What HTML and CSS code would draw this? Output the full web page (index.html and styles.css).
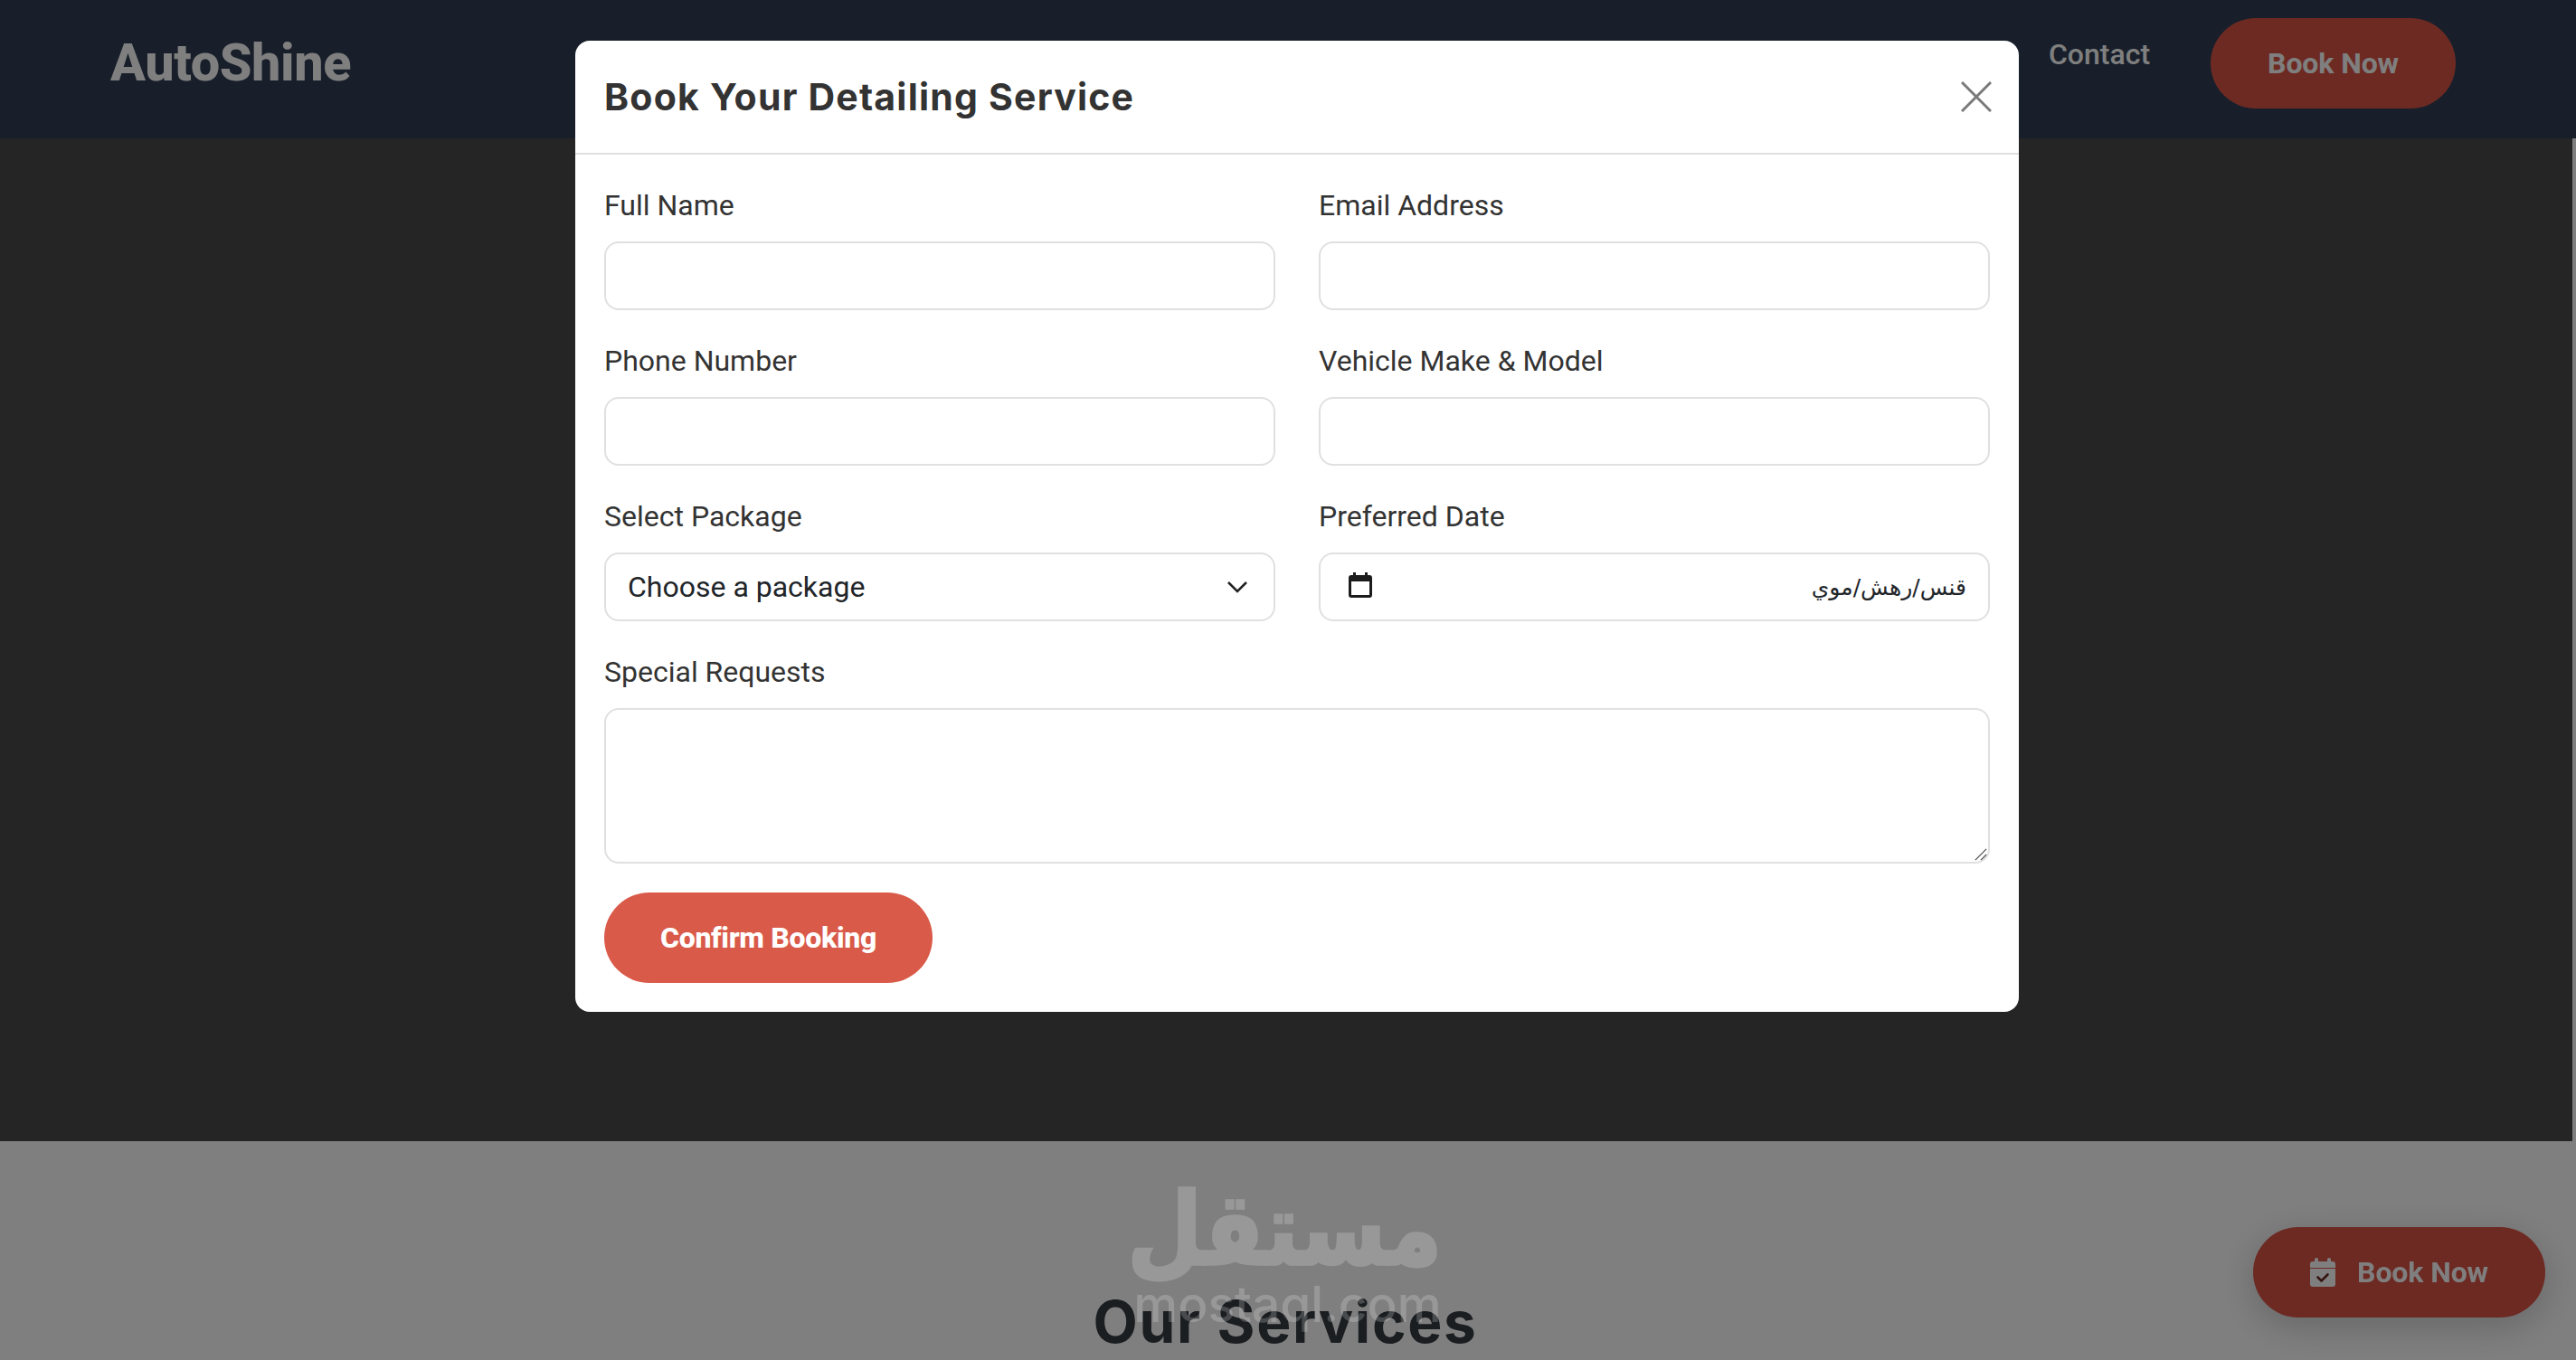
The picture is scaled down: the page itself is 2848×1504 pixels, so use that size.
FILE: index.html
```html
<!DOCTYPE html>
<html lang="en">
<head>
<meta charset="UTF-8">
<meta name="viewport" content="width=device-width, initial-scale=1.0">
<title>AutoShine</title>
<link rel="stylesheet" href="styles.css">
</head>
<body>

<header class="site-header">
    <a class="logo" href="#">AutoShine</a>
    <div class="header-right">
        <a class="nav-link" href="#">Contact</a>
        <a class="btn-book" href="#">Book Now</a>
    </div>
</header>

<section class="hero"></section>

<section class="services">
    <h2>Our Services</h2>
</section>

<a class="btn-float" href="#">
    <svg class="float-icon" viewBox="0 0 28 32">
        <path fill="currentColor" d="M7 0a2 2 0 0 1 2 2v2h10V2a2 2 0 0 1 4 0v2h2a3 3 0 0 1 3 3v4H0V7a3 3 0 0 1 3-3h2V2a2 2 0 0 1 2-2z"/>
        <path fill="currentColor" fill-rule="evenodd" d="M0 12h28v17a3 3 0 0 1-3 3H3a3 3 0 0 1-3-3z"/>
        <path fill="none" stroke="#6d2a23" stroke-width="2.6" stroke-linecap="round" stroke-linejoin="round" d="M8.5 21.5l4 4 7-7"/>
    </svg>
    Book Now
</a>

<div class="backdrop">
    <div class="modal">
        <div class="modal-header">
            <h3>Book Your Detailing Service</h3>
            <svg class="close-icon" viewBox="0 0 34 34">
                <path d="M1 1l32 32M33 1L1 33" fill="none" stroke="#7a7a7a" stroke-width="3"/>
            </svg>
        </div>
        <form class="modal-body">
            <div class="form-grid">
                <div class="field">
                    <label>Full Name</label>
                    <input type="text">
                </div>
                <div class="field">
                    <label>Email Address</label>
                    <input type="text">
                </div>
                <div class="field">
                    <label>Phone Number</label>
                    <input type="text">
                </div>
                <div class="field">
                    <label>Vehicle Make &amp; Model</label>
                    <input type="text">
                </div>
                <div class="field">
                    <label>Select Package</label>
                    <div class="control select-control">
                        <span>Choose a package</span>
                        <svg class="chevron" viewBox="0 0 24 14">
                            <path d="M2 2l10 10L22 2" fill="none" stroke="#222" stroke-width="2.6"/>
                        </svg>
                    </div>
                </div>
                <div class="field">
                    <label>Preferred Date</label>
                    <div class="control date-control">
                        <svg class="calendar" viewBox="0 0 26 28">
                            <path fill="#1c1c1c" fill-rule="evenodd" d="M5 0h3v3h10V0h3v3h2a3 3 0 0 1 3 3v19a3 3 0 0 1-3 3H3a3 3 0 0 1-3-3V6a3 3 0 0 1 3-3h2zM3 10v15h20V10z"/>
                        </svg>
                        <span class="date-text" dir="rtl">قنس/رهش/موي</span>
                    </div>
                </div>
                <div class="field field-wide">
                    <label>Special Requests</label>
                    <div class="textarea-wrap">
                        <textarea></textarea>
                        <svg class="resize-grip" viewBox="0 0 16 16">
                            <path d="M1 15L15 1M8 15l7-7" fill="none" stroke="#555" stroke-width="1.6"/>
                        </svg>
                    </div>
                </div>
            </div>
            <button class="btn-confirm" type="button">Confirm Booking</button>
        </form>
    </div>
</div>

<div class="watermark">
    <div class="watermark-ar" dir="rtl">مستقل</div>
    <div class="watermark-en">mostaql.com</div>
</div>

</body>
</html>
```

FILE: styles.css
```css
* {
    box-sizing: border-box;
}
body {
    margin: 0;
    height: 1504px;
    overflow: hidden;
    background-color: #fff;
    font-family: Roboto, "Liberation Sans", sans-serif;
    font-size: 32px;
    color: #212529;
}
a {
    text-decoration: none;
}

/* page behind the modal */
.site-header {
    height: 153px;
    padding: 0 133px 14px 122px;
    display: flex;
    justify-content: space-between;
    align-items: center;
    background-color: #303f54;
}
.logo {
    font-size: 57.6px;
    font-weight: 800;
    letter-spacing: -0.4px;
    color: #fff;
}
.header-right {
    display: flex;
    align-items: center;
    gap: 67px;
}
.nav-link {
    margin-top: -20px;
    font-weight: 500;
    color: #fff;
}
.btn-book {
    height: 100px;
    padding: 0 63px;
    display: flex;
    align-items: center;
    border-radius: 50px;
    background-color: #da5446;
    font-weight: 700;
    letter-spacing: -0.1px;
    color: #fff;
}
.hero {
    height: 1109px;
    margin-right: 4px;
    background-color: #4a4a4a;
}
.services {
    margin-right: 6px;
    padding-top: 162px;
    text-align: center;
}
.services h2 {
    margin: 0;
    font-family: Inter, "Liberation Sans", sans-serif;
    font-size: 64px;
    font-weight: 700;
    letter-spacing: 1.7px;
    line-height: 76px;
    color: #363c42;
}
.btn-float {
    position: fixed;
    right: 34px;
    bottom: 47px;
    height: 100px;
    padding: 0 63px;
    display: flex;
    align-items: center;
    gap: 24px;
    border-radius: 50px;
    background-color: #da5446;
    box-shadow: 0 10px 40px rgba(0, 0, 0, 0.2);
    font-weight: 700;
    letter-spacing: -0.1px;
    color: #fff;
}
.float-icon {
    width: 28px;
    height: 32px;
}

/* modal */
.backdrop {
    position: fixed;
    top: 0;
    left: 0;
    right: 0;
    bottom: 0;
    padding: 45px 0 0 20px;
    display: flex;
    justify-content: center;
    align-items: flex-start;
    background-color: rgba(0, 0, 0, 0.5);
}
.modal {
    width: 1596px;
    border-radius: 16px;
    background-color: #fff;
}
.modal-header {
    height: 126px;
    padding: 0 30px 0 32px;
    display: flex;
    justify-content: space-between;
    align-items: center;
    border-bottom: 2px solid #e0e0e0;
}
.modal-header h3 {
    margin: 0;
    font-family: Inter, "Liberation Sans", sans-serif;
    font-size: 41px;
    font-weight: 700;
    letter-spacing: 1.2px;
    color: #333;
}
.close-icon {
    width: 34px;
    height: 34px;
}
.modal-body {
    padding: 32px;
}
.form-grid {
    display: grid;
    grid-template-columns: 1fr 1fr;
    column-gap: 48px;
}
.field {
    margin-bottom: 32px;
}
.field-wide {
    grid-column: 1 / 3;
}
.field label {
    display: block;
    margin-bottom: 16px;
    line-height: 48px;
    color: #333;
}
.field input,
.field textarea,
.control {
    display: block;
    width: 100%;
    height: 76px;
    border: 2px solid #e0e0e0;
    border-radius: 16px;
    background-color: #fff;
    outline: none;
}
.field textarea {
    height: 172px;
    resize: none;
}
.textarea-wrap {
    position: relative;
}
.resize-grip {
    position: absolute;
    right: 3px;
    bottom: 3px;
    width: 14px;
    height: 14px;
}
.control {
    padding: 0 24px;
    display: flex;
    justify-content: space-between;
    align-items: center;
}
.chevron {
    width: 24px;
    height: 14px;
    margin-right: 4px;
}
.calendar {
    width: 26px;
    height: 28px;
    margin: -4px 0 0 7px;
}
.date-text {
    font-family: "DejaVu Sans", sans-serif;
    font-size: 25px;
}
.btn-confirm {
    height: 100px;
    padding: 0 62px;
    display: block;
    border: none;
    border-radius: 50px;
    background-color: #d95a49;
    font-family: Roboto, "Liberation Sans", sans-serif;
    font-size: 32px;
    font-weight: 800;
    letter-spacing: -0.3px;
    color: #fff;
}

/* stock site mark that lies over the whole page */
.watermark {
    position: fixed;
    left: 1253px;
    top: 1308px;
    width: 341px;
    text-align: center;
    color: #fff;
    opacity: 0.2;
}
.watermark-ar {
    font-family: "DejaVu Sans", sans-serif;
    font-size: 95px;
    font-weight: 700;
    line-height: 104px;
    -webkit-text-stroke: 3px #fff;
    transform: scaleY(1.16);
}
.watermark-en {
    font-family: Inter, "Liberation Sans", sans-serif;
    font-size: 55px;
    font-weight: 500;
    line-height: 60px;
}
```
